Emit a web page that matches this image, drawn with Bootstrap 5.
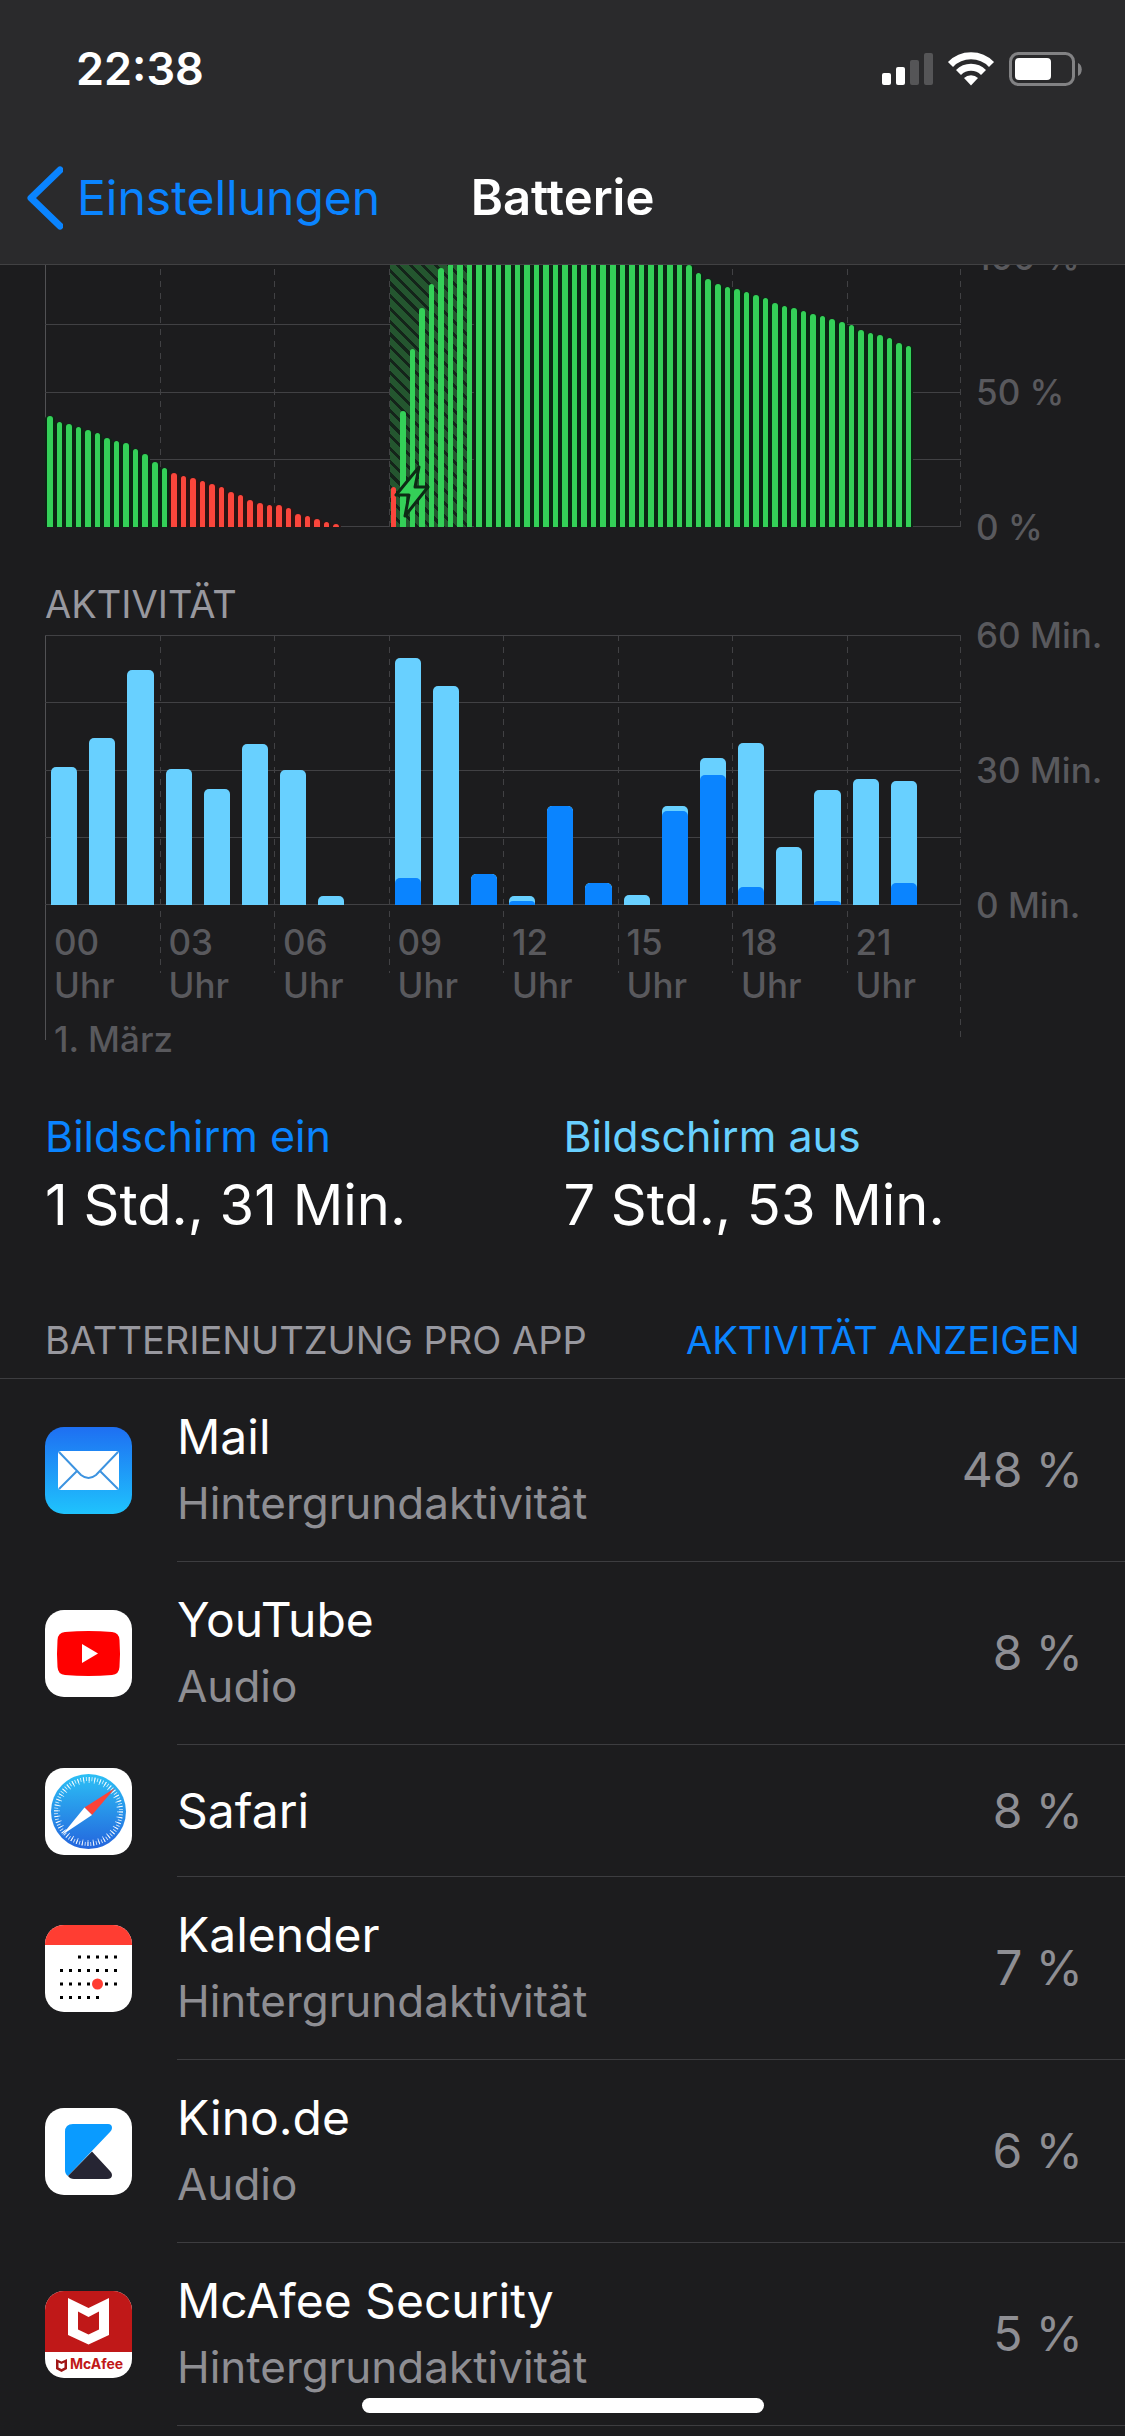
<!DOCTYPE html>
<html lang="de" data-bs-theme="dark">
<head>
<meta charset="utf-8">
<meta name="viewport" content="width=device-width, initial-scale=1">
<title>Batterie</title>
<link rel="stylesheet" href="https://cdn.jsdelivr.net/npm/bootstrap@5.3.0/dist/css/bootstrap.min.css">
<style>
  :root { --line: #414144; --blue: #0a84ff; --cyan: #68d0ff; --green: #34d058; --red: #fb463c; --side: 45px; --axis: 164px; }
  body { background: #1c1c1e; color: #fff; font-family: Inter, "Liberation Sans", sans-serif; }
  a { text-decoration: none; }
  .topbar { height: 265px; background: #2a2a2c; border-bottom: 1px solid #414143; }
  .statusbar { height: 138px; padding: 0 43px 0 76px; }
  .clock { font-size: 45px; font-weight: 600; }
  .titlebar { height: 120px; font-size: 49px; }
  .titlebar-side { flex: 1 1 0; min-width: 0; }
  .back { color: var(--blue); padding-left: 26px; gap: 14px; font-size: 48px; }
  .content { padding-top: 257px; }
  .chart-row { padding-left: var(--side); }
  .axis { flex: none; width: var(--axis); height: 270px; padding-left: 15px; font-size: 35px; font-weight: 500; color: #59595d; }
  .axis span { height: 0; line-height: 0; white-space: nowrap; }
  .plot { min-width: 0; background:
      linear-gradient(var(--line), var(--line)) 0 0 / 100% 1px no-repeat,
      linear-gradient(var(--line), var(--line)) 0 67px / 100% 1px no-repeat,
      linear-gradient(var(--line), var(--line)) 0 135px / 100% 1px no-repeat,
      linear-gradient(var(--line), var(--line)) 0 202px / 100% 1px no-repeat,
      linear-gradient(var(--line), var(--line)) 0 269px / 100% 1px no-repeat,
      repeating-linear-gradient(var(--line) 0 6px, transparent 6px 12px) 100% 0 / 1px 402px no-repeat,
      linear-gradient(#515154, #515154) 0 0 / 1px 405px no-repeat; }
  .span3h { flex: 1 1 0; min-width: 0; background: repeating-linear-gradient(var(--line) 0 6px, transparent 6px 12px) 0 0 / 1px 338px no-repeat; }
  .span3h:first-child { background: none; }
  .bars { height: 270px; }
  .level .bars { gap: 4px; padding: 0 2px; overflow: hidden; }
  .level i { flex: 1 1 0; border-radius: 3px 3px 0 0; background: var(--green); box-shadow: 2px 0 #0b2614, -2px 0 #0b2614; }
  .level i.low { background: var(--red); box-shadow: 2px 0 #2f1413, -2px 0 #2f1413; }
  .level i.charging { box-shadow: none; }
  .level i.none { visibility: hidden; }
  .hatch { left: calc(37.5% + 1px); width: 9%; top: 0; bottom: 0; background: repeating-linear-gradient(45deg, #14241a 0 3px, #24562f 3px 9px); }
  .bolt { left: 38%; bottom: 7px; width: 38px; height: 56px; }
  .usage .bars { gap: 12px; padding: 0 6px; }
  .usage i { flex: 1 1 0; background: var(--cyan); border-radius: 5px 5px 0 0; overflow: hidden; }
  .usage b { background: var(--blue); border-radius: 5px 5px 0 0; }
  .hour, .day { font-size: 35px; line-height: 43px; font-weight: 500; color: #59595d; padding-left: 9px; }
  .hour { padding-top: 16px; padding-right: 30px; }
  .day { padding-top: 11px; }
  .caption-sm { font-size: 38px; line-height: 48px; color: #98989f; }
  .activity-title { margin: 53px 0 7px; padding-left: var(--side); }
  .totals { margin-top: 45px; padding-left: var(--side); }
  .totals-first { width: 48%; }
  .totals-label { font-size: 43px; line-height: 60px; }
  .totals-value { font-size: 56px; line-height: 78px; }
  .tone-on { color: var(--blue); }
  .tone-off { color: var(--cyan); }
  .section-head { margin-top: 72px; padding: 0 var(--side) 14px; border-bottom: 1px solid #3d3d40; }
  .app { padding-left: var(--side); gap: 45px; }
  .app-icon { width: 87px; height: 87px; flex: none; }
  .app-body { min-height: 132px; padding: 25px 42px 25px 0; border-bottom: 1px solid #3d3d40; }
  .app-name { font-size: 48px; line-height: 66px; }
  .app-sub { font-size: 44px; line-height: 66px; color: #8e8e93; }
  .app-share { font-size: 48px; line-height: 66px; color: #8e8e93; }
  .home-bar { width: 402px; height: 15px; margin-bottom: 23px; border-radius: 8px; background: #fff; }
</style>
<script src="https://cdn.jsdelivr.net/npm/bootstrap@5.3.0/dist/js/bootstrap.bundle.min.js"></script>
</head>
<body>
<header class="topbar fixed-top">
  <div class="statusbar d-flex justify-content-between align-items-center">
    <span class="clock">22:38</span>
    <svg width="202" height="36" viewBox="0 0 202 36" role="img" aria-label="Mobilfunk, WLAN, Akku">
      <rect x="2" y="22" width="9" height="12" rx="2" fill="#fff"/><rect x="16" y="16" width="9" height="18" rx="2" fill="#fff"/>
      <rect x="30" y="9" width="9" height="25" rx="2" fill="#555557"/><rect x="44" y="2" width="9" height="32" rx="2" fill="#555557"/>
      <g fill="none" stroke="#fff" stroke-width="7"><path d="M70.500 13.500a28.500 28.500 0 0 1 41 0"/><path d="M78.500 21.500a17.500 17.500 0 0 1 25 0"/></g>
      <path d="M91 34.500l-7-7.500a10 10 0 0 1 14 0z" fill="#fff"/>
      <rect x="130.500" y="2.500" width="63" height="31" rx="8" fill="none" stroke="#828284" stroke-width="3"/>
      <rect x="135" y="7" width="36" height="22" rx="4" fill="#fff"/><path d="M198 12v13c5-2 5-11 0-13z" fill="#828284"/>
    </svg>
  </div>
  <nav class="titlebar d-flex align-items-center">
    <div class="titlebar-side">
      <a href="#" class="back d-flex align-items-center">
        <svg width="37" height="64" viewBox="0 0 37 64" aria-hidden="true"><path d="M34 4L5 32l29 28" fill="none" stroke="#0a84ff" stroke-width="7" stroke-linecap="round" stroke-linejoin="round"/></svg>
        <span>Einstellungen</span>
      </a>
    </div>
    <span class="fw-semibold">Batterie</span>
    <div class="titlebar-side"></div>
  </nav>
</header>

<main class="content">
  <section class="chart-row level d-flex" aria-label="Batterieladung">
    <div class="plot d-flex flex-fill position-relative">
      <div class="hatch position-absolute"></div>
      <div id="level" class="d-flex flex-fill position-relative"></div>
      <svg class="bolt position-absolute" viewBox="0 0 38 56"><path d="M26 3L3 31h13l-4 21L35 23H22z" fill="#34d058" stroke="#0d2a15" stroke-width="3" stroke-linejoin="round"/></svg>
    </div>
    <div class="axis d-flex flex-column justify-content-between"><span>100 %</span><span>50 %</span><span>0 %</span></div>
  </section>

  <h2 class="caption-sm activity-title fw-normal">AKTIVITÄT</h2>
  <section class="chart-row usage d-flex" aria-label="Aktivität">
    <div class="plot flex-fill">
      <div id="usage" class="d-flex"></div>
      <div class="day">1. März</div>
    </div>
    <div class="axis d-flex flex-column justify-content-between"><span>60 Min.</span><span>30 Min.</span><span>0 Min.</span></div>
  </section>

  <section class="totals row g-0">
    <div class="totals-first"><div class="totals-label tone-on">Bildschirm ein</div><div class="totals-value">1 Std., 31 Min.</div></div>
    <div class="col"><div class="totals-label tone-off">Bildschirm aus</div><div class="totals-value">7 Std., 53 Min.</div></div>
  </section>

  <div class="section-head caption-sm d-flex justify-content-between">
    <span>BATTERIENUTZUNG PRO APP</span><a href="#" class="tone-on">AKTIVITÄT ANZEIGEN</a>
  </div>

  <ul class="list-unstyled mb-0">
    <li class="app d-flex align-items-center">
      <svg class="app-icon" viewBox="0 0 87 87"><defs><linearGradient id="gm" x2="0" y2="1"><stop stop-color="#1e6ff2"/><stop offset="1" stop-color="#1fc3fd"/></linearGradient></defs>
        <rect width="87" height="87" rx="19" fill="url(#gm)"/><rect x="13" y="24" width="61" height="39" rx="3" fill="#fff"/>
        <path d="M14 25l22 23q7.500 6 15 0l22-23M14 62l18-18M73 62L55 44" fill="none" stroke="#3c93e0" stroke-width="2"/></svg>
      <div class="app-body d-flex flex-fill align-items-center justify-content-between"><div><div class="app-name">Mail</div><div class="app-sub">Hintergrundaktivität</div></div><div class="app-share">48 %</div></div>
    </li>
    <li class="app d-flex align-items-center">
      <svg class="app-icon" viewBox="0 0 87 87"><rect width="87" height="87" rx="19" fill="#fff"/><path d="M20 22q23.500-2 47 0 7 .5 7.500 8 1 13.500 0 27-.5 7.500-7.500 8-23.500 2-47 0-7-.5-7.500-8-1-13.500 0-27 .5-7.500 7.500-8z" fill="#f00"/><path d="M37 34v19l16-9.500z" fill="#fff"/></svg>
      <div class="app-body d-flex flex-fill align-items-center justify-content-between"><div><div class="app-name">YouTube</div><div class="app-sub">Audio</div></div><div class="app-share">8 %</div></div>
    </li>
    <li class="app d-flex align-items-center">
      <svg class="app-icon" viewBox="0 0 87 87"><defs><linearGradient id="gs" x2="0" y2="1"><stop stop-color="#2cc0f5"/><stop offset="1" stop-color="#2465dd"/></linearGradient></defs>
        <rect width="87" height="87" rx="19" fill="#fff"/><circle cx="43.500" cy="43.500" r="37.500" fill="url(#gs)"/>
        <circle cx="43.500" cy="43.500" r="32.500" fill="none" stroke="#fff" stroke-width="4" stroke-dasharray=".9 1.936" opacity=".8"/>
        <circle cx="43.500" cy="43.500" r="31.500" fill="none" stroke="#fff" stroke-width="6" stroke-dasharray=".9 4.598" opacity=".8"/>
        <path d="M70 20L39.500 39.500l7.500 7.500z" fill="#fb4338"/><path d="M17 67l22.500-27.500L47 47z" fill="#fff"/></svg>
      <div class="app-body d-flex flex-fill align-items-center justify-content-between"><div class="app-name">Safari</div><div class="app-share">8 %</div></div>
    </li>
    <li class="app d-flex align-items-center">
      <svg class="app-icon" viewBox="0 0 87 87"><rect width="87" height="87" rx="19" fill="#fff"/><path d="M0 20v-1A19 19 0 0 1 19 0h49a19 19 0 0 1 19 19v1z" fill="#ff3d32"/>
        <g stroke="#000" stroke-width="3" stroke-dasharray="3 6"><path d="M33 32h39M15 45.500h57M15 59h57M15 72.500h39"/></g><circle cx="52.500" cy="59" r="5.500" fill="#ff3d32"/></svg>
      <div class="app-body d-flex flex-fill align-items-center justify-content-between"><div><div class="app-name">Kalender</div><div class="app-sub">Hintergrundaktivität</div></div><div class="app-share">7 %</div></div>
    </li>
    <li class="app d-flex align-items-center">
      <svg class="app-icon" viewBox="0 0 87 87"><rect width="87" height="87" rx="19" fill="#fff"/><path d="M23 68q-3-2-3-6V24q0-8 8-8h35q4 0 4 4 0 2-2 4z" fill="#0a9bff"/><path d="M47 43.500L23 68q2 3 6 3h33q5 0 5-4 0-2-2-4z" fill="#262533"/></svg>
      <div class="app-body d-flex flex-fill align-items-center justify-content-between"><div><div class="app-name">Kino.de</div><div class="app-sub">Audio</div></div><div class="app-share">6 %</div></div>
    </li>
    <li class="app d-flex align-items-center">
      <svg class="app-icon" viewBox="0 0 87 87"><rect width="87" height="87" rx="19" fill="#fff"/><path d="M0 61V19A19 19 0 0 1 19 0h49a19 19 0 0 1 19 19v42z" fill="#c01818"/>
        <path fill-rule="evenodd" d="M23 7l20.500 10L64 7v37l-20.500 9.500L23 44zM33 20.500V38.500l10.500 5 10.500-5v-18L43.500 26z" fill="#fff"/>
        <path fill-rule="evenodd" d="M11 68l5.500 2.500L22 68v10l-5.500 3-5.500-3zM13.500 71.500v5l3 1.500 3-1.500v-5l-3 1.500z" fill="#a01515"/>
        <text x="25" y="78" font-family="Inter, sans-serif" font-size="14" font-weight="700" fill="#c01818">McAfee</text></svg>
      <div class="app-body d-flex flex-fill align-items-center justify-content-between"><div><div class="app-name">McAfee Security</div><div class="app-sub">Hintergrundaktivität</div></div><div class="app-share">5 %</div></div>
    </li>
  </ul>
</main>
<div class="fixed-bottom d-flex justify-content-center"><div class="home-bar"></div></div>

<script>
  // Battery level in percent, one value per quarter of an hour
  const level = [41,39,38,37,36,35,33,32,31,29,27,24,22,20,19,18,17,16,15,13,12,10,9,8,8,7,5,4,3,2,1,
    0,0,0,0,0,15,43,66,81,90,96,...Array(25).fill(100),97,94,92,90,89,88,87,86,85,83,82,81,80,79,78,77,76,75,73,72,71,70,68,67,0,0,0,0,0];
  // Minutes per hour: [total, of these with the screen on]
  const usage = [[30.6,0],[37.1,0],[52.3,0],[30.2,0],[25.8,0],[35.7,0],[30,0],[2,0],[0,0],[54.9,6],[48.6,0],[7,7],
    [2,1],[22,22],[5,5],[2.2,0],[22,21],[32.6,29],[36,4],[12.9,0],[25.6,1],[27.9,0],[27.5,5],[0,0]];
  let a = '', b = '';
  for (let c = 0; c < 8; c++) {
    a += '<div class="span3h"><div class="bars d-flex align-items-end">';
    for (let i = c * 12; i < c * 12 + 12; i++) {
      const v = level[i], k = !v ? 'none' : v <= 20 ? 'low' : '';
      a += `<i class="${k}${i > 35 && i < 45 ? ' charging' : ''}" style="height:${v}%"></i>`;
    }
    a += '</div></div>';
    b += '<div class="span3h"><div class="bars d-flex align-items-end">';
    for (const [t, on] of usage.slice(c * 3, c * 3 + 3))
      b += `<i class="d-flex align-items-end" style="height:${t / 0.6}%"><b class="w-100" style="height:${t ? on / t * 100 : 0}%"></b></i>`;
    b += `</div><div class="hour">${String(c * 3).padStart(2, '0')} Uhr</div></div>`;
  }
  document.getElementById('level').innerHTML = a;
  document.getElementById('usage').innerHTML = b;
</script>
</body>
</html>
